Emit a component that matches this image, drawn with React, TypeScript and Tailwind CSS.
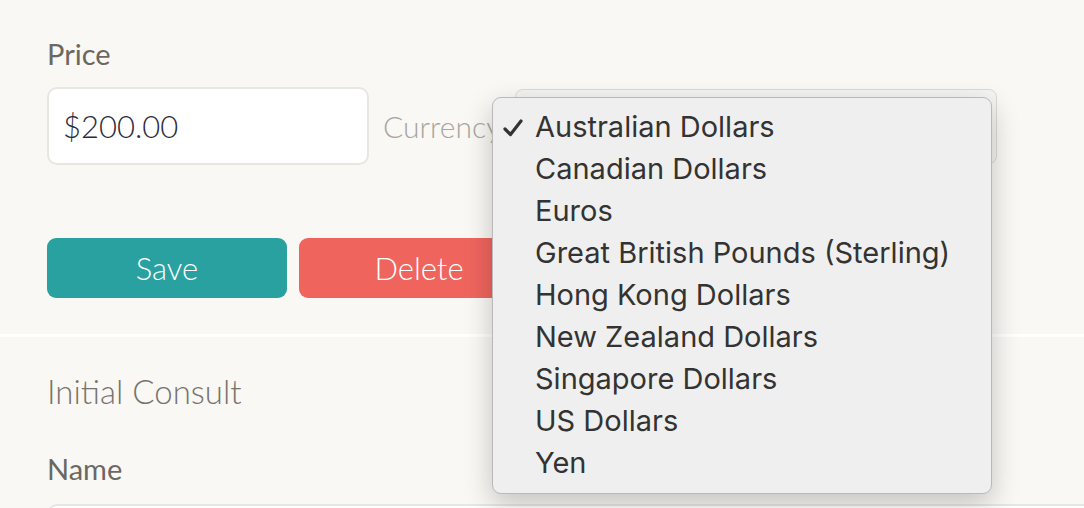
const currencies = [
  "Australian Dollars",
  "Canadian Dollars",
  "Euros",
  "Great British Pounds (Sterling)",
  "Hong Kong Dollars",
  "New Zealand Dollars",
  "Singapore Dollars",
  "US Dollars",
  "Yen",
];

function CurrencyMenu({ selected }: { selected: string }) {
  return (
    <div className="absolute left-[492px] top-[97px] w-[500px] rounded-[9px] border border-[#b9b9b9] bg-[#efefef] pb-[9px] pt-[8px] shadow-[0_10px_28px_rgba(0,0,0,0.22)] [font-family:Inter,'Noto_Sans',sans-serif]">
      {currencies.map((c) => (
        <div key={c} className="relative flex h-[42px] items-center pl-[42px] text-[29px] text-[#333333]">
          {c === selected && (
            <svg
              className="absolute left-[10px] top-[13px]"
              width="20"
              height="18"
              viewBox="0 0 20 18"
            >
              <path d="M2 10 L7.5 15.5 L18 2" fill="none" stroke="#333" strokeWidth="3.2" strokeLinecap="round" strokeLinejoin="round" />
            </svg>
          )}
          {c}
        </div>
      ))}
    </div>
  );
}

export default function App() {
  return (
    <div className="relative h-[508px] w-[1084px] overflow-hidden bg-[#f9f8f5] [font-family:Lato,'Open_Sans',sans-serif]">
      <div className="px-[47px] pt-[34px]">
        <div className="text-[29px] font-normal leading-[40px] text-[#6b6863]">Price</div>
        <div className="mt-[13px] flex items-center">
          <div className="flex h-[78px] w-[322px] items-center rounded-[10px] border-2 border-[#e8e6e1] bg-white pl-[14px] text-[31px] font-light text-[#2b2b3c]">
            $200.00
          </div>
          <span className="ml-[14px] text-[30px] font-light text-[#a9a6a0]">Currency</span>
          <div className="ml-[14px] h-[75px] w-[482px] rounded-[8px] border border-[#dcdad5] bg-[#f4f4f3]" />
        </div>
        <div className="mt-[73px] flex gap-[12px]">
          <button className="flex h-[60px] w-[240px] items-center justify-center rounded-[9px] bg-[#2aa1a1] text-[31px] font-light text-white">
            Save
          </button>
          <button className="flex h-[60px] w-[240px] items-center justify-center rounded-[9px] bg-[#ef655e] text-[31px] font-light text-white">
            Delete
          </button>
        </div>
      </div>
      <div className="mt-[36px] h-[3px] w-full bg-white" />
      <div className="pl-[47px] pt-[32px]">
        <div className="text-[33px] font-light leading-[44px] text-[#77736d]">Initial Consult</div>
        <div className="mt-[36px] text-[29px] font-normal leading-[40px] text-[#6b6863]">Name</div>
        <div className="mt-[15px] h-[60px] w-[1060px] rounded-[10px] border-2 border-[#e8e6e1] bg-white" />
      </div>
      <CurrencyMenu selected="Australian Dollars" />
    </div>
  );
}
